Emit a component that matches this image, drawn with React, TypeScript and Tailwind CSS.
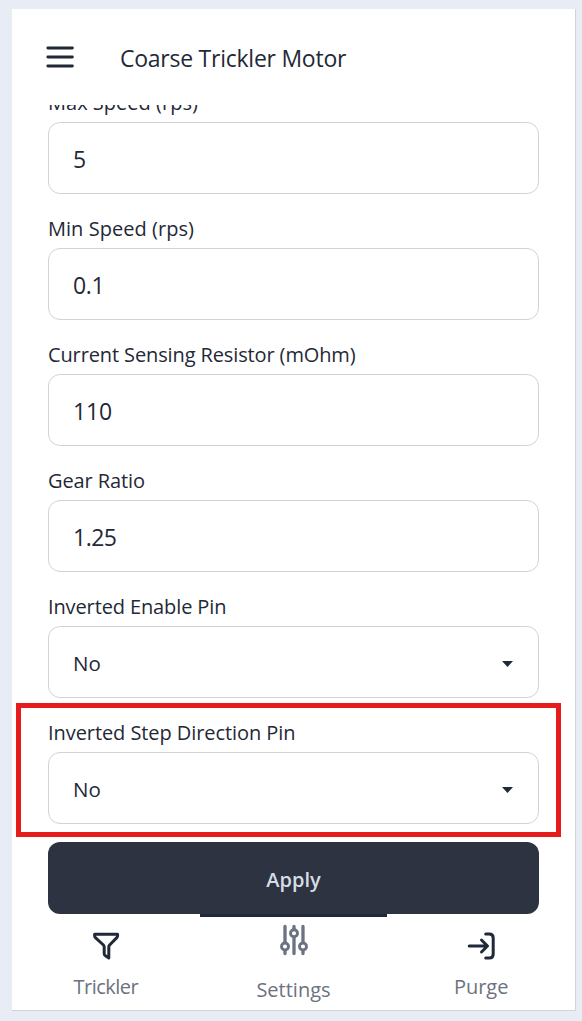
import type { ReactNode } from "react";

const fields = [
  { label: "Max Speed (rps)", value: "5", labelClass: "tracking-[0.02px]", valueClass: "" },
  { label: "Min Speed (rps)", value: "0.1", labelClass: "tracking-[0.04px]", valueClass: "tracking-[-0.3px]" },
  { label: "Current Sensing Resistor (mOhm)", value: "110", labelClass: "tracking-[-0.12px]", valueClass: "tracking-[-0.2px]" },
  { label: "Gear Ratio", value: "1.25", labelClass: "tracking-[-0.1px]", valueClass: "tracking-[-0.5px]" },
];

function Label({ children, className }: { children: ReactNode; className: string }) {
  return (
    <div className={`h-[54px] pt-[19px] text-[20px] leading-[32px] whitespace-nowrap text-[#1f2937] ${className}`}>
      {children}
    </div>
  );
}

function TextField({ label, value, labelClass, valueClass }: (typeof fields)[number]) {
  return (
    <div>
      <Label className={labelClass}>{label}</Label>
      <div className={`flex h-[72px] items-center rounded-xl border border-[#d2d3d6] px-6 pt-[2px] text-[23px] ${valueClass}`}>
        {value}
      </div>
    </div>
  );
}

function SelectField({ label, labelClass }: { label: string; labelClass: string }) {
  return (
    <div>
      <Label className={labelClass}>{label}</Label>
      <div className="flex h-[72px] items-center justify-between rounded-xl border border-[#d2d3d6] pr-[25px] pl-6 text-[20.5px]">
        <span className="pt-[3px]">No</span>
        <svg width="11" height="6" viewBox="0 0 11 6" className="mt-[3px]" fill="#1f2937">
          <path d="M0 0h11L5.5 6z" />
        </svg>
      </div>
    </div>
  );
}

export default function App() {
  return (
    <div className="h-[1021px] w-[582px] overflow-hidden bg-[#e8edf5] pt-[9px] pl-3 font-['Open_Sans','Noto_Sans',sans-serif] text-[#1f2937]">
      <div className="relative flex h-[1002px] w-[564px] flex-col border-r border-b border-[#d2d3d6] bg-white">
        <header className="flex h-[96px] shrink-0 items-center pl-[34px]">
          <svg width="28" height="24" viewBox="0 0 28 24" fill="none" stroke="#1f2937" strokeWidth="2.8" strokeLinecap="round">
            <path d="M1.8 3h24.6M1.8 12h24.6M1.8 21h24.6" />
          </svg>
          <h1 className="ml-[46px] pt-[3px] text-[23px] tracking-[-0.25px] whitespace-nowrap">Coarse Trickler Motor</h1>
        </header>
        <main className="h-[809px] shrink-0 overflow-hidden px-9">
          <div className="-mt-[37px]">
            {fields.map((f) => (
              <TextField key={f.label} {...f} />
            ))}
            <SelectField label="Inverted Enable Pin" labelClass="tracking-[-0.12px]" />
            <SelectField label="Inverted Step Direction Pin" labelClass="tracking-[-0.07px]" />
            <button className="mt-[18px] flex h-[72px] w-full items-center justify-center rounded-xl bg-[#2d3341] pt-[4px] text-[20px] font-semibold text-[#d7dde4]">
              Apply
            </button>
          </div>
        </main>
        <nav className="grid h-[96px] grid-cols-3 text-[20px] text-[#6b7280]">
          <div className="flex flex-col items-center pt-[17px]">
            <svg width="30" height="30" viewBox="0 0 30 30" fill="none" stroke="#1f2937" strokeWidth="3" strokeLinejoin="round" strokeLinecap="round">
              <path d="M3.6 3.2h23v1.4q0 1.2-.8 2L18.6 14q-.8.8-.8 2v11l-3.4-2.2q-1.2-.8-1.2-2V16q0-1.200-.8-2L4.400 6.600q-.8-.8-.8-2z" />
            </svg>
            <span className="mt-[11px] leading-[30px] tracking-[-0.5px]">Trickler</span>
          </div>
          <div className="flex flex-col items-center border-t-[3px] border-[#1f2937] pt-[7px]">
            <svg width="30" height="32" viewBox="0 0 30 32" className="ml-[2px]" fill="none" stroke="#6b7280" strokeWidth="3.3" strokeLinecap="round">
              <path d="M6 2.5v16M6 27v2.5M15 2.5v3M15 14v15.5M24 2.5v16M24 27v2.5" />
              <circle cx="6" cy="22.5" r="3.5" strokeWidth="2.9" />
              <circle cx="15" cy="9.2" r="3.5" strokeWidth="2.9" />
              <circle cx="24" cy="22.5" r="3.5" strokeWidth="2.9" />
            </svg>
            <span className="mt-[19px] leading-[30px]">Settings</span>
          </div>
          <div className="flex flex-col items-center pt-[17px]">
            <svg width="30" height="30" viewBox="0 0 30 30" fill="none" stroke="#1f2937" strokeWidth="3" strokeLinejoin="round" strokeLinecap="round">
              <path d="M3.2 15h18M15.5 9l6 6-6 6M19.700 3h3.700q3.800 0 3.800 4v16q0 4-3.800 4h-3.700" />
            </svg>
            <span className="mt-[11px] leading-[30px]">Purge</span>
          </div>
        </nav>
        <div className="pointer-events-none absolute top-[694px] left-[4px] h-[134px] w-[545px] border-[5px] border-[#e51b1c]" />
      </div>
    </div>
  );
}
